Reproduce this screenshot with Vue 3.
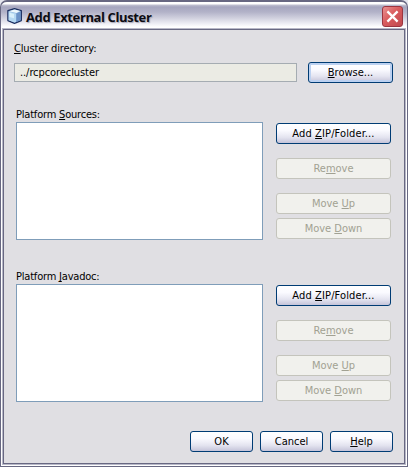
<script setup>
import { ref } from 'vue'

const directory = ref('../rcpcorecluster')
const panels = [
  { id: 'sources', before: 'Platform ', key: 'S', after: 'ources:' },
  { id: 'javadoc', before: 'Platform ', key: 'J', after: 'avadoc:' },
]
</script>

<template>
  <div class="window">
    <header class="titlebar">
      <svg class="logo" width="16" height="16" viewBox="0 0 16 16">
        <path d="M7.5.7 14.3 2.6v10l-6.8 2.7L.9 12.6v-10z" fill="#8fb4dc" stroke="#1c2f60" stroke-width="1.3" stroke-linejoin="round" />
        <path d="M7.5 1.4 13.4 3 9.4 5 2 3.2z" fill="#edf8fd" />
        <path d="M1.6 3.6 9 5.4v8.6l-1.5.6-5.9-2.4z" fill="#b5d8f2" />
        <path d="M9.4 5.4 13.6 3.4v8.8l-4.2 1.7z" fill="#6c93c8" />
        <path d="M2.4 4.8 7 5.9v4.3L2.4 9z" fill="#d8effa" />
      </svg>
      <h1 class="title">Add External Cluster</h1>
      <button class="close" aria-label="Close">
        <svg width="13" height="13" viewBox="0 0 13 13"><path d="M1.4 1.4 11.6 11.6M11.6 1.4 1.4 11.6" stroke="#fff" stroke-width="2.3" /></svg>
      </button>
    </header>
    <main class="content">
      <label class="dir-label"><span><u>C</u>luster directory:</span></label>
      <div class="dir-row">
        <div class="field">{{ directory }}</div>
        <button class="btn browse"><span><u>B</u>rowse...</span></button>
      </div>
      <section v-for="p in panels" :key="p.id" class="panel">
        <div class="left">
          <label class="list-label"><span>{{ p.before }}<u>{{ p.key }}</u>{{ p.after }}</span></label>
          <div class="list"></div>
        </div>
        <div class="actions">
          <button class="btn add"><span>Add <u>Z</u>IP/Folder...</span></button>
          <button class="btn remove" disabled><span>Re<u>m</u>ove</span></button>
          <button class="btn up" disabled><span>Move <u>U</u>p</span></button>
          <button class="btn down" disabled><span>Move <u>D</u>own</span></button>
        </div>
      </section>
      <footer class="footer">
        <button class="btn"><span>OK</span></button>
        <button class="btn"><span>Cancel</span></button>
        <button class="btn"><span><u>H</u>elp</span></button>
      </footer>
    </main>
  </div>
</template>

<style>
body { background: #e6e6ee; overflow: hidden; }
</style>

<style scoped>
* { box-sizing: border-box; }
.window {
  width: 408px;
  height: 467px;
  padding: 0 1px 1px;
  border: 1px solid #686882;
  border-top-width: 2px;
  border-radius: 7px 7px 0 0;
  background: linear-gradient(#fff 0, #fff 2px, #c0c0d0 3px, #a6a6bf 5px, #b2b2c8 10px, #d0d0de 16px, #f0f0f6 22px, #fff 25px, #fff 100%);
  font-family: "DejaVu Sans Condensed", "DejaVu Sans", sans-serif;
  font-stretch: condensed;
  font-size: 11px;
  line-height: 14px;
  color: #000;
  display: flex;
  flex-direction: column;
}
.titlebar {
  flex: none;
  height: 27px;
  padding: 4px 3px 2px 5px;
  display: flex;
  align-items: flex-start;
}
.logo { margin-top: 2px; }
.title {
  margin: 2px 0 0 3px;
  flex: 1;
  font: bold 13px/18px "Open Sans", sans-serif;
  letter-spacing: -0.38px;
  color: #0c0c14;
  text-shadow: 1px 1px 1px #a8a8b8;
  white-space: nowrap;
}
.close {
  width: 21px;
  height: 21px;
  padding: 0;
  border: 1px solid #9c3540;
  border-radius: 3px;
  background: linear-gradient(135deg, #ea9292, #d95c5e 45%, #c04a50);
  display: flex;
  align-items: center;
  justify-content: center;
}
.content {
  flex: 1;
  border: 1px solid #686882;
  box-shadow: 0 0 0 1px #b8b8c8;
  margin: 0 1px 1px;
  background: #e0dfe3;
  padding: 12px 10px 0;
}
label { display: block; white-space: nowrap; height: 14px; letter-spacing: -0.15px; }
u { text-decoration: underline; text-underline-offset: 1px; text-decoration-thickness: 1px; text-decoration-skip-ink: none; }
.dir-row { display: flex; align-items: flex-start; justify-content: space-between; height: 45px; margin-top: 6px; padding-right: 1px; }
.field {
  width: 283px;
  height: 19px;
  margin-top: 1px;
  padding: 2px 5px 0;
  border: 1px solid #a5acb2;
  background: #ebebe4;
  letter-spacing: -0.08px;
}
.panel { display: flex; gap: 13px; height: 162px; padding-left: 2px; }
.left { width: 247px; }
.list-label { margin-top: 1px; letter-spacing: -0.2px; }
.list { height: 118px; border: 1px solid #7f9db9; background: #fff; }
.actions { width: 115px; padding-top: 16px; display: flex; flex-direction: column; }
.btn {
  display: flex;
  align-items: center;
  justify-content: center;
  width: 100%;
  height: 21px;
  flex: none;
  margin: 0;
  padding: 1px 0 0;
  border: 1px solid #003c74;
  border-radius: 3px;
  background: linear-gradient(#fff, #fafaff 35%, #e4e4f0 70%, #c5c4d9);
  font: inherit;
  color: #000;
  white-space: nowrap;
}
.add { letter-spacing: 0.12px; }
.browse { width: 85px; box-shadow: inset 0 0 0 2px #bcd1f1; }
.btn:disabled { border-color: #c4c4bc; background: #f1f1ed; color: #a1a192; }
.remove, .up { margin-top: 14px; }
.down { margin-top: 4px; }
.footer { display: flex; justify-content: flex-end; gap: 7px; padding-right: 1px; }
.footer .btn { width: 63px; }
</style>
